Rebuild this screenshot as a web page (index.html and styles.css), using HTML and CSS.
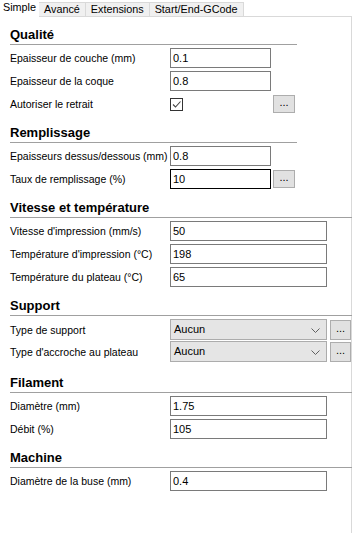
FILE: index.html
```html
<!DOCTYPE html>
<html lang="fr">
<head>
  <meta charset="UTF-8" />
  <title>Réglages d'impression</title>
  <link rel="stylesheet" href="styles.css">
</head>
<body>
  <div class="tabs">
    <div class="tab active">Simple</div>
    <div class="tab">Avancé</div>
    <div class="tab">Extensions</div>
    <div class="tab">Start/End-GCode</div>
  </div>

  <div class="panel">
    <div class="group narrow">
      <h2>Qualité</h2>
      <div class="row">
        <label>Epaisseur de couche (mm)</label>
        <input class="field short" type="text" value="0.1">
      </div>
      <div class="row">
        <label>Epaisseur de la coque</label>
        <input class="field short" type="text" value="0.8">
      </div>
      <div class="row">
        <label>Autoriser le retrait</label>
        <div class="check-cell">
          <span class="checkbox">
            <svg width="11" height="11" viewBox="0 0 11 11"><polyline points="2,5.5 4.5,8 9.5,2.5" fill="none" stroke="#444" stroke-width="1.1"/></svg>
          </span>
        </div>
        <button class="more">...</button>
      </div>
    </div>

    <div class="group narrow">
      <h2>Remplissage</h2>
      <div class="row">
        <label>Epaisseurs dessus/dessous (mm)</label>
        <input class="field short" type="text" value="0.8">
      </div>
      <div class="row">
        <label>Taux de remplissage (%)</label>
        <input class="field short focus" type="text" value="10">
        <button class="more">...</button>
      </div>
    </div>

    <div class="group">
      <h2>Vitesse et température</h2>
      <div class="row">
        <label>Vitesse d'impression (mm/s)</label>
        <input class="field" type="text" value="50">
      </div>
      <div class="row">
        <label>Température d'impression (°C)</label>
        <input class="field" type="text" value="198">
      </div>
      <div class="row">
        <label>Température du plateau (°C)</label>
        <input class="field" type="text" value="65">
      </div>
    </div>

    <div class="group">
      <h2>Support</h2>
      <div class="row tight">
        <label>Type de support</label>
        <div class="select">Aucun
          <svg class="chev" width="9" height="5" viewBox="0 0 9 5"><polyline points="0.5,0.5 4.5,4.5 8.5,0.5" fill="none" stroke="#606060"/></svg>
        </div>
        <button class="more small">...</button>
      </div>
      <div class="row tight">
        <label>Type d'accroche au plateau</label>
        <div class="select">Aucun
          <svg class="chev" width="9" height="5" viewBox="0 0 9 5"><polyline points="0.5,0.5 4.5,4.5 8.5,0.5" fill="none" stroke="#606060"/></svg>
        </div>
        <button class="more small">...</button>
      </div>
    </div>

    <div class="group spaced">
      <h2>Filament</h2>
      <div class="row">
        <label>Diamètre (mm)</label>
        <input class="field" type="text" value="1.75">
      </div>
      <div class="row">
        <label>Débit (%)</label>
        <input class="field" type="text" value="105">
      </div>
    </div>

    <div class="group">
      <h2>Machine</h2>
      <div class="row">
        <label>Diamètre de la buse (mm)</label>
        <input class="field" type="text" value="0.4">
      </div>
    </div>
  </div>
</body>
</html>
```

FILE: styles.css
```css
body {
  margin: 0;
  background: #fff;
  font-family: "Liberation Sans", Arial, sans-serif;
  font-size: 11px;
  color: #000;
}

.tabs {
  display: flex;
  align-items: flex-end;
  height: 16px;
}

.tab {
  height: 14px;
  line-height: 13px;
  padding: 0 5px;
  background: #f0f0f0;
  border: 1px solid #d9d9d9;
  border-bottom: none;
  border-left: none;
  box-sizing: border-box;
  font-size: 10.8px;
}

.tab.active {
  height: 17px;
  margin-bottom: -1px;
  line-height: 15px;
  padding: 0 3px;
  background: #fff;
  border: none;
  position: relative;
}

.panel {
  width: 352px;
  height: 517px;
  box-sizing: border-box;
  border-top: 1px solid #d9d9d9;
  border-right: 1px solid #d9d9d9;
  padding-top: 10px;
}

.group {
  margin-left: 10px;
  width: 342px;
}

.group + .group {
  margin-top: 11px;
}

.group.spaced {
  margin-top: 13px;
}

.group.narrow {
  width: 287px;
}

h2 {
  margin: 0 0 3px;
  font-size: 13px;
  line-height: 16px;
  padding-bottom: 1px;
  border-bottom: 1px solid #a0a0a0;
}

.row {
  display: flex;
  align-items: center;
  height: 20px;
  margin-bottom: 3px;
}

.row.tight {
  height: 21px;
  margin-bottom: 1px;
}

.row label {
  width: 160px;
  white-space: nowrap;
  font-size: 10.5px;
}

.field {
  width: 157px;
  height: 20px;
  box-sizing: border-box;
  border: 1px solid #7a7a7a;
  padding: 0 2px;
  font-family: inherit;
  font-size: 11px;
  color: #000;
  background: #fff;
  outline: none;
}

.field.short {
  width: 101px;
}

.field.focus {
  border-color: #000;
}

.check-cell {
  width: 101px;
}

.checkbox {
  display: flex;
  align-items: center;
  justify-content: center;
  width: 13px;
  height: 13px;
  box-sizing: border-box;
  border: 1px solid #333;
  background: #fff;
}

.more {
  width: 22px;
  height: 18px;
  margin-left: 2px;
  padding: 0 0 3px;
  box-sizing: border-box;
  border: 1px solid #adadad;
  background: #e1e1e1;
  font-family: inherit;
  font-size: 11px;
  line-height: 11px;
  color: #000;
}

.more.small {
  width: 21px;
  height: 20px;
  margin-left: 3px;
}

.select {
  position: relative;
  width: 157px;
  height: 21px;
  box-sizing: border-box;
  border: 1px solid #acacac;
  background: #e5e5e5;
  padding-left: 3px;
  line-height: 19px;
}

.chev {
  position: absolute;
  right: 6px;
  top: 8px;
}
```
